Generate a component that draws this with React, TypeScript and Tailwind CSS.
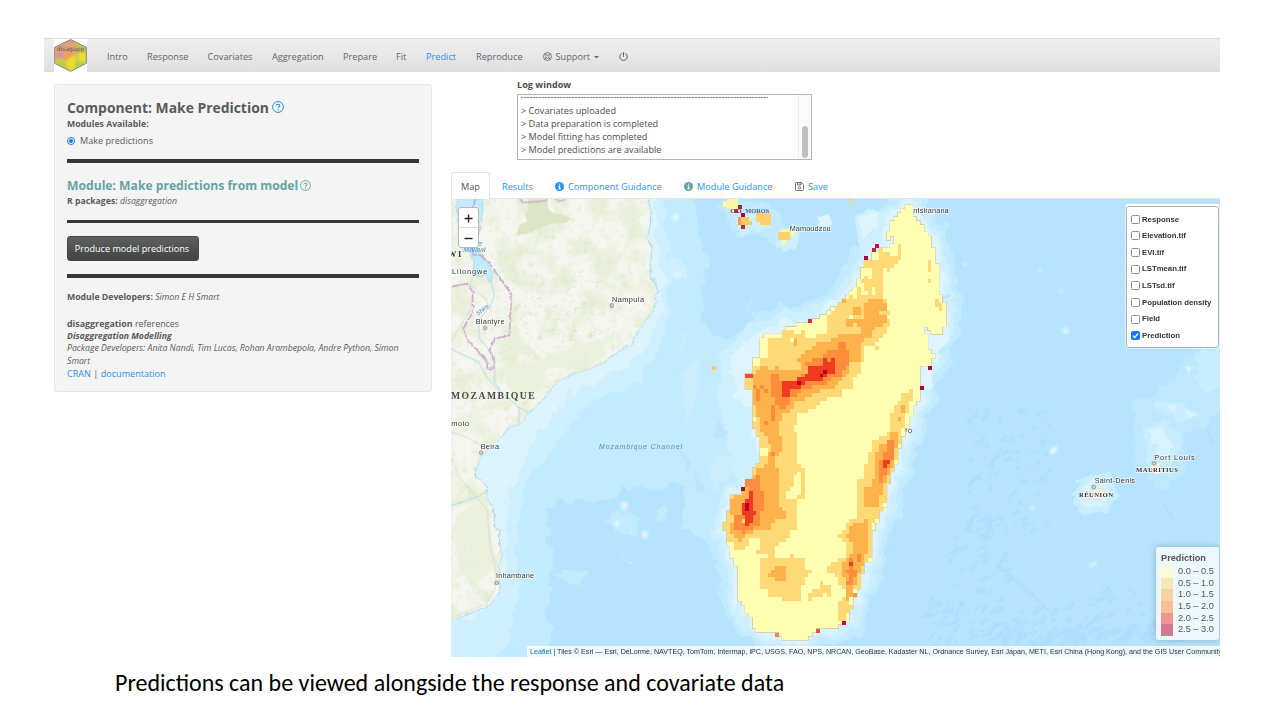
import React from "react";

type Pt = [number, number];
type Shape = { level: number; pts: Pt[] };
type Box = [level: number, x0: number, y0: number, x1: number, y1: number];

const CELL_W = 11.16;
const CELL_H = 11.76;
const ORIGIN_X = 113 - CELL_W * 8;
const ORIGIN_Y = 30;
const COLS = 61;
const ROWS = 112;

const LEVEL_COLORS = ["none", "#ffffb2", "#fed976", "#feb24c", "#fd8d3c", "#f03b20", "#bd0026"];

const parse = (s: string): Pt[] => s.trim().split(/\s+/).map((p) => p.split(",").map(Number) as Pt);

const OUTLINE =
  "570,30 592,30 592,53 603,65 615,77 626,89 626,112 638,124 650,124 650,160 660,160 660,207 671,207 671,301 683,301 683,324 693,324 693,395 683,395 683,418 650,418 640,406 637,395 626,395 626,418 637,418 637,465 649,465 649,478 660,478 660,489 649,489 649,513 615,513 615,618 604,630 592,630 592,665 581,665 581,700 571,700 571,724 560,724 560,760 549,760 549,806 537,806 537,830 526,830 526,865 515,865 515,935 504,935 504,950 493,950 493,983 481,983 481,1006 470,1006 470,1100 448,1100 448,1137 437,1137 437,1172 426,1172 426,1206 413,1206 413,1230 402,1230 402,1277 380,1277 370,1300 313,1300 300,1312 280,1325 268,1336 202,1336 202,1325 190,1312 135,1312 124,1300 113,1289 113,1277 101,1253 90,1253 90,1230 79,1218 68,1218 68,1113 57,1113 57,1088 46,1088 46,1053 36,1053 36,1006 25,1006 25,983 36,983 36,947 46,947 46,912 57,900 79,900 90,890 90,855 113,855 113,818 124,818 124,806 135,800 135,724 124,724 124,700 113,700 113,583 101,583 101,571 90,571 90,536 113,536 113,500 124,489 135,489 135,430 147,418 202,418 214,406 214,395 247,395 247,383 290,383 290,372 313,372 313,360 336,360 336,348 347,348 347,336 369,330 369,324 381,324 381,312 392,312 392,301 403,301 403,289 415,289 415,277 426,277 426,254 437,254 437,218 448,218 448,195 470,195 470,180 482,171 492,171 492,160 526,160 526,148 537,148 537,124 526,124 526,136 515,136 515,112 526,112 526,77 537,77 548,65 548,53 560,53 560,42 570,42";

const SHAPES: Shape[] = [
  { level: 1, pts: parse(OUTLINE) },
  {
    level: 2,
    pts: parse(
      "448,195 492,195 492,160 504,160 504,171 526,171 526,183 548,183 548,148 560,148 560,183 548,195 548,207 537,207 526,218 526,230 515,230 504,218 504,312 515,312 515,348 526,348 526,360 515,360 526,383 526,395 504,395 515,406 504,418 492,430 482,442 470,454 448,460 448,500 437,500 437,530 426,530 415,560 415,583 381,583 381,595 370,606 347,606 336,618 302,630 302,642 258,653 247,665 247,683 236,683 236,712 247,712 247,806 258,806 268,830 268,912 247,912 247,1006 225,1006 225,1018 214,1030 202,1041 190,1053 180,1065 180,1088 225,1088 225,1077 236,1077 236,1088 268,1088 268,1113 280,1123 291,1123 291,1134 280,1137 268,1160 258,1172 258,1206 247,1218 202,1218 202,1206 158,1206 158,1183 135,1183 135,1100 135,1088 158,1088 158,1077 124,1077 124,1065 135,1065 135,1030 113,1030 101,1041 101,1053 90,1053 90,1065 68,1065 57,1053 46,1041 36,1041 36,1006 25,1006 25,983 36,983 36,947 46,947 46,912 57,900 79,900 90,890 90,855 113,855 113,818 124,818 124,806 135,800 135,740 124,712 113,690 113,583 101,583 90,571 90,536 113,536 113,513 135,513 135,489 147,489 158,478 158,430 202,430 202,406 236,406 236,418 258,418 258,406 268,406 268,430 302,430 302,418 314,418 325,430 336,412 336,360 347,348 369,336 381,324 392,312 403,301 415,312 426,301 415,289 426,277 437,277 437,300 448,312 448,277 437,265 437,254 448,242 460,254 460,218 448,218",
    ),
  },
  {
    level: 3,
    pts: parse(
      "113,536 135,524 135,513 158,513 158,524 190,513 190,524 247,524 258,513 247,489 258,478 270,465 302,454 313,442 350,442 350,430 372,430 372,418 426,418 437,406 437,395 415,372 415,336 437,336 437,360 448,372 448,324 459,324 459,313 504,313 504,324 515,324 515,348 493,348 493,360 515,360 515,372 504,383 493,395 470,406 470,430 448,430 437,442 437,500 403,500 403,530 392,545 370,560 347,583 325,583 302,595 258,618 236,618 236,642 214,653 202,665 190,680 190,724 202,724 202,771 180,783 180,806 190,818 190,935 214,950 214,971 190,971 169,983 169,1006 135,1006 113,1012 101,1018 90,1030 79,1041 68,1030 46,1018 46,1006 57,960 46,947 46,912 79,900 90,870 113,850 124,830 135,818 158,806 158,783 169,760 158,735 147,724 135,700 135,665 124,653 113,653 113,595",
    ),
  },
  {
    level: 4,
    pts: parse(
      "169,536 190,536 190,560 236,560 247,548 280,530 280,513 258,513 280,500 302,489 325,489 325,478 336,478 336,465 350,465 370,465 370,442 392,442 392,465 403,465 403,500 392,513 381,530 381,545 359,545 336,560 325,571 302,571 290,583 268,583 247,595 247,606 225,606 225,618 214,630 202,642 190,630 190,618 180,642 180,677 169,677 169,630 180,618 180,606 169,595",
    ),
  },
  {
    level: 4,
    pts: parse(
      "90,855 113,855 113,870 124,842 135,842 135,888 147,900 147,947 135,947 135,983 113,1006 90,1006 90,1018 68,1006 57,1006 57,960 79,960 79,924 101,912 101,890 90,870",
    ),
  },
  {
    level: 5,
    pts: parse(
      "202,560 236,560 247,548 270,548 270,536 280,530 280,513 302,513 325,507 325,489 336,489 336,500 347,500 347,489 359,489 359,536 336,536 325,548 313,560 270,560 270,571 258,571 258,583 225,583 225,606 202,606",
    ),
  },
  {
    level: 5,
    pts: parse(
      "101,890 113,890 113,947 124,947 124,960 113,960 113,983 101,983 101,995 90,995 90,960 79,960 79,924 90,924 101,912",
    ),
  },
  {
    level: 2,
    pts: parse(
      "581,583 592,583 592,618 581,618 581,650 571,665 571,700 560,700 560,735 549,750 549,800 537,800 537,830 526,830 526,853 515,865 504,877 515,888 515,912 504,935 504,947 493,947 493,971 481,971 481,983 470,983 470,1088 448,1100 448,1125 437,1137 437,1172 426,1183 413,1183 413,1206 402,1218 413,1241 402,1253 392,1265 392,1277 370,1277 370,1218 392,1206 392,1183 370,1172 370,1148 347,1137 336,1125 336,1113 359,1100 370,1088 392,1088 392,1041 370,1030 370,1018 381,1018 392,995 402,983 402,971 426,971 426,855 448,855 448,806 459,806 459,771 470,771 470,735 492,735 492,724 515,724 515,712 526,712 526,654 537,653 537,630 549,618 560,618 560,600 571,600",
    ),
  },
  {
    level: 3,
    pts: parse(
      "526,712 549,712 549,748 537,771 537,806 526,820 515,853 504,865 504,890 493,912 493,930 470,930 470,935 448,935 448,880 470,877 470,865 481,842 481,771 493,760 493,748 515,748",
    ),
  },
  {
    level: 3,
    pts: parse(
      "437,971 437,983 448,971 459,971 459,1065 448,1077 448,1100 437,1125 426,1148 426,1160 413,1172 413,1206 402,1206 402,1218 392,1218 392,1172 402,1160 381,1137 381,1100 402,1088 415,1065 415,1041 392,1030 392,1018 402,1018 402,1006 415,983 426,983",
    ),
  },
  { level: 4, pts: parse("515,735 537,735 537,790 526,806 515,818 515,842 504,842 504,865 493,865 493,806 504,783 504,771 515,771") },
  { level: 4, pts: parse("402,1088 415,1100 415,1125 426,1125 426,1148 413,1148 413,1172 392,1172 392,1160 402,1148 402,1137 392,1137 392,1125 402,1113") },
  { level: 2, pts: parse("313,1160 325,1160 325,1172 347,1172 347,1206 336,1206 336,1195 302,1206 302,1206 291,1218 280,1218 280,1195 302,1183 313,1172") },
  { level: 3, pts: parse("158,1137 180,1125 180,1113 214,1113 214,1160 202,1160 202,1148 190,1160 180,1148 158,1148") },
];

const BOXES: Box[] = [
  [1, 247, 830, 258, 900],
  [1, 236, 842, 247, 912],
  [1, 225, 877, 236, 912],
  [1, 214, 888, 225, 912],
  [1, 135, 760, 158, 783],
  [1, 459, 230, 470, 254],
  [1, 470, 277, 482, 301],
  [1, 448, 289, 459, 301],
  [1, 403, 360, 415, 383],
  [2, 415, 360, 437, 372],
  [3, 392, 372, 415, 395],
  [3, 381, 312, 392, 324],
  [1, 459, 218, 470, 230],
  [1, 280, 418, 291, 430],
  [1, 225, 430, 236, 442],
  [3, 236, 430, 247, 454],
  [2, 482, 454, 493, 465],
  [2, 638, 195, 649, 230],
  [2, 638, 254, 649, 265],
  [2, 660, 313, 671, 336],
  [2, 671, 324, 683, 348],
  [3, 560, 630, 571, 653],
  [3, 549, 665, 560, 677],
  [4, 426, 1077, 437, 1100],
  [5, 504, 795, 526, 806],
  [5, 504, 806, 515, 818],
  [5, 402, 1100, 413, 1113],
  [4, 113, 571, 124, 583],
  [4, 124, 583, 135, 618],
  [4, 135, 571, 147, 583],
  [4, 147, 583, 158, 590],
  [4, 147, 677, 158, 690],
  [4, 169, 771, 180, 783],
  [2, 113, 630, 124, 653],
  [1, 113, 665, 124, 677],
  [6, 325, 524, 336, 536],
  [6, 313, 536, 325, 548],
  [6, 247, 560, 258, 571],
  [6, 90, 924, 101, 947],
  [2, 79, 971, 90, 983],
];

function inside(x: number, y: number, pts: Pt[]): boolean {
  let hit = false;
  for (let i = 0, j = pts.length - 1; i < pts.length; j = i++) {
    const [xi, yi] = pts[i];
    const [xj, yj] = pts[j];
    if (yi > y !== yj > y && x < ((xj - xi) * (y - yi)) / (yj - yi) + xi) hit = !hit;
  }
  return hit;
}

function rasterise() {
  const rects: { x: number; y: number; w: number; level: number }[] = [];
  for (let r = 0; r < ROWS; r++) {
    const cy = ORIGIN_Y + (r + 0.5) * CELL_H;
    let start = 0;
    let prev = 0;
    for (let c = 0; c <= COLS; c++) {
      const cx = ORIGIN_X + (c + 0.5) * CELL_W;
      let level = 0;
      if (c < COLS) {
        for (const s of SHAPES) if (inside(cx, cy, s.pts)) level = s.level;
        if (level) for (const [l, x0, y0, x1, y1] of BOXES) if (cx > x0 && cx < x1 && cy > y0 && cy < y1) level = l;
      }
      if (level !== prev) {
        if (prev) rects.push({ x: ORIGIN_X + start * CELL_W, y: ORIGIN_Y + r * CELL_H, w: (c - start) * CELL_W, level: prev });
        start = c;
        prev = level;
      }
    }
  }
  return rects;
}

const RASTER = rasterise();

const LOOSE: [string, number, number, number, number][] = [
  ["#a80a36", 447, 183, 12, 12],
  ["#c02348", 470, 160, 12, 12],
  ["#b8183e", 481, 148, 12, 12],
  ["#c5304c", 280, 372, 12, 12],
  ["#a80a36", 638, 513, 12, 12],
  ["#a80a36", 615, 572, 12, 12],
  ["#a80a36", 79, 877, 12, 12],
  ["#b8183e", 381, 1278, 12, 12],
  ["#e05a45", 302, 1301, 12, 12],
  ["#f3814b", 180, 1313, 12, 12],
  ["#f5955c", 413, 1195, 12, 12],
  ["#e05540", 90, 536, 23, 12],
  ["#f58a58", 90, 855, 23, 12],
  ["#fdc766", -9, 512, 13, 13],
  ["#fff5a8", 25, 18, 45, 18],
  ["#fff5a8", 36, 12, 32, 31],
  ["#fb9a5a", 68, 67, 11, 24],
  ["#fdc766", 79, 67, 22, 24],
  ["#fdc766", 101, 79, 11, 12],
  ["#c02348", 57, 43, 12, 11],
  ["#b8183e", 68, 31, 12, 12],
  ["#a80a36", 79, 55, 12, 12],
  ["#c02348", 79, 91, 12, 12],
  ["#fdd070", 124, 55, 45, 26],
  ["#fdd070", 135, 81, 34, 10],
  ["#fff5a8", 202, 101, 22, 12],
  ["#fdd070", 190, 112, 35, 24],
  ["#fff5a8", 224, 112, 12, 12],
  ["#fff5a8", 202, 136, 12, 12],
  ["#fdd070", 402, 12, 12, 7],
];

const COAST =
  "M-60,-40 L595,-40 595,12 603,50 600,95 591,130 606,160 601,205 600,240 608,262 612,250 615,270 625,288 612,306 618,318 609,345 600,360 575,395 553,428 545,450 530,452 500,475 480,486 465,500 425,520 380,532 345,548 310,572 290,600 262,632 235,655 215,685 180,695 155,722 140,742 110,770 88,790 85,810 78,820 75,845 90,855 108,870 112,890 110,910 125,930 132,955 135,1000 150,1005 148,1040 156,1080 148,1110 148,1140 150,1190 120,1230 90,1243 60,1255 3,1278 -60,1300Z";

const BORDER = "M3,275 L52,266 68,290 68,350 55,375 40,402 56,440 85,470 110,495 M110,495 L112,520 130,520 133,495 118,465 135,430 178,422 185,300 150,250 118,205 95,182 70,180 66,150 M75,12 L70,40";

function seeded(seed: number) {
  let s = seed;
  return () => {
    s = (s * 16807) % 2147483647;
    return s / 2147483647;
  };
}

function scatter(n: number, seed: number, x0: number, y0: number, x1: number, y1: number, size: number) {
  const rnd = seeded(seed);
  return Array.from({ length: n }, () => ({
    x: x0 + rnd() * (x1 - x0),
    y: y0 + rnd() * (y1 - y0),
    rx: size * (0.3 + rnd()),
    ry: size * (0.15 + rnd() * 0.35),
    a: -50 + rnd() * 30,
  }));
}

const HILLS = scatter(80, 77, 190, 230, 470, 440, 6);
const RIDGES = [
  ...scatter(110, 91, 1555, 640, 1800, 1010, 13),
  ...scatter(50, 12, 1500, 960, 1680, 1190, 15),
  ...scatter(110, 41, 1430, 1210, 1960, 1340, 15),
  ...scatter(80, 5, 1640, 1290, 2120, 1350, 17),
  ...scatter(50, 8, 1960, 1180, 2300, 1340, 15),
];

function BaseMap() {
  return (
    <svg className="block h-full w-full" viewBox="3 12 2307 1374" preserveAspectRatio="none">
      <defs>
        <filter id="rough" x="-5%" y="-5%" width="110%" height="110%" colorInterpolationFilters="sRGB">
          <feTurbulence type="fractalNoise" baseFrequency="0.022" numOctaves="4" seed="4" result="n" />
          <feDisplacementMap in="SourceGraphic" in2="n" scale="48" xChannelSelector="R" yChannelSelector="G" />
        </filter>
        <filter id="fine" x="-5%" y="-5%" width="110%" height="110%" colorInterpolationFilters="sRGB">
          <feTurbulence type="fractalNoise" baseFrequency="0.07" numOctaves="3" seed="9" result="n" />
          <feDisplacementMap in="SourceGraphic" in2="n" scale="10" xChannelSelector="R" yChannelSelector="G" />
        </filter>
        <filter id="green" x="0" y="0" width="100%" height="100%" colorInterpolationFilters="sRGB">
          <feTurbulence type="fractalNoise" baseFrequency="0.014" numOctaves="6" seed="21" />
          <feColorMatrix values="0 0 0 0 0.91  0 0 0 0 0.942  0 0 0 0 0.85  4 0 0 0 -1.7" />
        </filter>
        <filter id="relief" x="0" y="0" width="100%" height="100%" colorInterpolationFilters="sRGB">
          <feTurbulence type="fractalNoise" baseFrequency="0.06" numOctaves="4" seed="3" />
          <feColorMatrix values="0 0 0 0 0.82  0 0 0 0 0.84  0 0 0 0 0.73  0 2.5 0 0 -1.4" />
        </filter>
        <filter id="soft" colorInterpolationFilters="sRGB">
          <feGaussianBlur stdDeviation="5" />
        </filter>
        <clipPath id="land">
          <path d={COAST} />
        </clipPath>
      </defs>

      <rect x="0" y="0" width="2320" height="1400" fill="#b6e4fe" />

      <g filter="url(#rough)">
        <path
          fill="#c3ebff"
          d="M500,-40 L735,-40 745,120 775,190 755,290 760,370 800,430 850,425 900,380 1000,330 1050,360 1000,700 900,900 860,1180 800,1080 760,1030 690,1010 715,930 700,860 600,890 510,870 500,905 400,925 330,915 285,960 300,1050 310,1110 290,1230 310,1386 150,1420 -60,1420 -60,1200 200,700Z"
        />
        <path fill="#b9e6fe" d="M690,740 L712,800 705,860 695,800Z M800,680 L830,720 800,730Z M735,830 L760,870 750,890Z" />
        <path fill="#c3ebff" d="M500,950 L560,960 570,1020 510,1020 460,980Z M310,1140 L420,1120 400,1170 330,1160Z M620,950 L650,940 640,985 615,975Z M515,1090 L540,1100 530,1110Z" />
        <path fill="#ceeffe" d="M590,-40 L640,-40 650,180 710,220 700,250 655,240 645,420 560,560 400,640 300,760 230,860 200,1000 210,1150 190,1290 130,1420 -60,1420 -60,1270 140,1100 60,800Z" />
        <path fill="#cbedfe" d="M700,520 L750,500 740,600 705,690 690,620Z M690,410 L705,420 700,480Z M810,780 L900,760 930,1000 830,960 775,830Z" />
        <path fill="#dcf4ff" d="M585,-40 L612,-40 612,100 640,260 635,360 580,470 450,560 360,590 280,700 220,790 180,880 165,1060 150,1200 80,1260 -60,1300 -60,1200 60,800Z" />
      </g>

      <g filter="url(#rough)" transform="translate(795 0)">
        <polygon points={OUTLINE} fill="#c3ebff" stroke="#c3ebff" strokeWidth="96" strokeLinejoin="round" />
        <polygon points={OUTLINE} fill="#ceeffe" stroke="#ceeffe" strokeWidth="58" strokeLinejoin="round" />
        <polygon points={OUTLINE} fill="#dcf4ff" stroke="#dcf4ff" strokeWidth="26" strokeLinejoin="round" />
        <path fill="#ceeffe" d="M10,620 L20,480 100,390 230,350 300,360 200,600 140,860 60,840Z M425,60 L470,40 520,60 480,150 430,170Z" />
        <path fill="#def5ff" d="M55,600 L45,500 120,415 220,375 290,380 200,600 140,840 120,740 110,650Z M440,60 L480,50 490,90 450,130Z M305,70 L350,65 350,95 305,95Z M650,390 L710,350 700,430 670,500 645,580 620,540Z" />
        <path fill="#c2eafe" d="M10,30 L170,20 200,90 260,110 230,160 180,150 120,110 60,120Z M100,290 L120,340 150,350 130,365 105,330Z" />
        <path fill="#ceeffe" d="M60,60 L170,55 170,95 80,110Z M185,95 L250,95 235,155 190,150Z" />
        <path fill="#bde8fe" d="M1260,620 L1330,600 1420,480 1530,440 1530,640 1460,700 1400,720 1420,850 1320,880 1260,780Z" />
        <path fill="#c8edfe" d="M1310,630 L1370,615 1450,650 1430,680 1340,660Z M1280,690 L1370,680 1400,740 1370,850 1310,830Z M1450,470 L1530,450 1530,570 1470,590 1440,530Z M1060,900 L1110,840 1190,840 1210,900 1180,950 1100,955Z" />
        <path fill="#d8f3ff" d="M1345,630 L1390,625 1385,655Z M1410,640 L1445,655 1420,670Z M1300,700 L1350,700 1370,790 1330,790Z M1400,520 L1440,520 1420,545Z M1095,870 L1140,850 1180,880 1170,930 1110,925Z" />
      </g>

      <g fill="#abddfc" opacity="0.75" filter="url(#fine)">
        {RIDGES.map((b, i) => (
          <ellipse key={i} cx={b.x} cy={b.y} rx={b.rx} ry={b.ry} transform={`rotate(${b.a} ${b.x} ${b.y})`} />
        ))}
      </g>
      <g fill="none" stroke="#add9f6" strokeWidth="7" opacity="0.6" filter="url(#fine)">
        <path d="M1640,1110 L1700,1160 1760,1210 1800,1250 M1460,320 L1500,300 M2140,930 L2170,970 M2270,700 L2290,750" />
      </g>
      <g fill="#e3f7ff" filter="url(#soft)">
        <circle cx="1847" cy="407" r="9" />
        <ellipse cx="1811" cy="766" rx="15" ry="8" transform="rotate(-45 1811 766)" />
        <ellipse cx="1930" cy="1108" rx="16" ry="6" transform="rotate(-30 1930 1108)" opacity="0.7" />
        <circle cx="1545" cy="207" r="5" />
        <circle cx="1768" cy="226" r="5" />
        <circle cx="1834" cy="289" r="5" />
        <circle cx="1747" cy="940" r="6" />
        <circle cx="584" cy="1018" r="10" />
        <circle cx="676" cy="66" r="10" />
        <circle cx="682" cy="241" r="9" />
        <circle cx="500" cy="985" r="8" />
        <circle cx="522" cy="932" r="11" />
      </g>

      <g filter="url(#fine)">
        <path d={COAST} fill="#f6f6f0" stroke="#a5d5ea" strokeWidth="3" />
        <g clipPath="url(#land)">
          <rect x="0" y="0" width="640" height="1300" filter="url(#green)" />
          <rect x="0" y="0" width="640" height="1300" filter="url(#relief)" opacity="0.4" />
          <path fill="#dce5c6" d="M235,12 L290,12 300,50 365,68 340,86 300,85 250,110 198,122 210,90 228,82 232,50Z" />
          <path fill="#e8f0d8" d="M320,470 L450,430 470,480 400,520 300,520 260,500Z M170,510 L290,500 280,580 200,620 170,560Z M20,960 L110,900 130,1060 120,1130 70,1180 20,1100Z" opacity="0.8" />
          <g fill="#cfd0b4" opacity="0.4">
            {HILLS.map((b, i) => (
              <ellipse key={i} cx={b.x} cy={b.y} rx={b.rx} ry={b.ry} transform={`rotate(${b.a} ${b.x} ${b.y})`} />
            ))}
          </g>
          <path fill="#c3ebfd" stroke="#9bd3ec" strokeWidth="2" d="M22,12 L100,12 98,50 88,110 80,150 95,185 115,210 128,240 122,262 105,240 78,248 70,225 72,195 45,160 30,110 20,60Z" />
        </g>
      </g>
      <g fill="none" strokeLinejoin="round">
        <path stroke="#dcd6cf" strokeWidth="2.5" d="M3,440 L30,395 60,345 70,290 110,310 M75,235 L60,270 100,300 125,350 M3,712 L50,725 90,750 M3,790 L30,850 70,895 112,945 120,1050 138,1130 135,1180 110,1225 20,1262" />
        <path stroke="#a9dbef" strokeWidth="3" d="M125,262 L133,300 120,335 85,375 88,430 118,465 135,500 133,560 150,585 M3,462 L40,480 85,500 112,550 140,580 175,610 205,635 235,652 M205,635 L210,660 205,682 M3,932 L40,920 60,912 85,905 112,885" />
        <g filter="url(#fine)">
          <path stroke="#c9a3cb" strokeWidth="5" opacity="0.85" strokeDasharray="26 3" d={BORDER} />
          <path stroke="#c9a3cb" strokeWidth="5" opacity="0.75" d="M208,12 L225,22 258,20 285,18 295,12 M315,12 L330,20 350,10" />
        </g>
      </g>
      <g fill="#f2efe8" stroke="#d8d4c8" strokeWidth="2" filter="url(#fine)">
        <ellipse cx="1942" cy="897" rx="24" ry="18" />
        <ellipse cx="2120" cy="820" rx="17" ry="20" />
      </g>

      <MapLabels />

      <g transform="translate(795 0)">
        <g fill="#d6c79a" stroke="#d6c79a" strokeWidth="4" opacity="0.8">
          {RASTER.map((b, i) => (
            <rect key={i} x={b.x} y={b.y} width={b.w} height={CELL_H} />
          ))}
        </g>
        <g shapeRendering="crispEdges">
          {RASTER.map((b, i) => (
            <rect key={i} x={b.x} y={b.y} width={b.w} height={CELL_H} fill={LEVEL_COLORS[b.level]} />
          ))}
          {LOOSE.map(([fill, x, y, w, h], i) => (
            <rect key={i} x={x} y={y} width={w} height={h} fill={fill} />
          ))}
        </g>
      </g>
      <text x="886" y="54" fontSize="19" textLength="72" fill="#333" opacity="0.75" fontWeight="700" fontFamily='"Liberation Serif", serif'>
        MOROS
      </text>
      <circle cx="1380" cy="708" r="5" fill="#fff" stroke="#666" strokeWidth="2.5" />
    </svg>
  );
}

type LabelDef = { t: string; x: number; y: number; w: number; s?: number; c?: string; serif?: boolean; italic?: boolean; rot?: number };

const LABELS: LabelDef[] = [
  { t: "Lilongwe", x: 6, y: 236, w: 106 },
  { t: "Nampula", x: 486, y: 321, w: 96 },
  { t: "Blantyre", x: 77, y: 388, w: 87 },
  { t: "moio", x: 4, y: 692, w: 53 },
  { t: "Beira", x: 92, y: 762, w: 55 },
  { t: "Inhambane", x: 138, y: 1150, w: 114 },
  { t: "Mamoudzou", x: 1019, y: 107, w: 123 },
  { t: "ntsiranana", x: 1390, y: 53, w: 106 },
  { t: "r", x: 1366, y: 712, w: 6 },
  { t: "Port Louis", x: 2113, y: 794, w: 121 },
  { t: "Saint-Denis", x: 1934, y: 864, w: 121 },
  { t: "MOZAMBIQUE", x: 3, y: 611, w: 251, s: 29, serif: true, c: "#4b4b4b" },
  { t: "WI", x: -6, y: 186, w: 40, s: 25, serif: true },
  { t: "CO", x: 841, y: 54, w: 34, s: 19, serif: true },
  { t: "MAURITIUS", x: 2058, y: 830, w: 126, s: 20, serif: true },
  { t: "RÉUNION", x: 1887, y: 905, w: 102, s: 20, serif: true },
  { t: "Mozambique Channel", x: 447, y: 761, w: 249, s: 21, italic: true, c: "#5592b0" },
  { t: "Malawi", x: 40, y: 171, w: 67, s: 21, italic: true, c: "#5592b0" },
  { t: "e", x: 84, y: 152, w: 12, s: 21, italic: true, c: "#5592b0" },
  { t: "Shire", x: 84, y: 362, w: 42, s: 18, italic: true, c: "#5592b0", rot: -38 },
];

const TOWNS: Pt[] = [
  [485, 332],
  [105, 399],
  [93, 773],
  [140, 1164],
  [2112, 805],
  [1931, 876],
];

function MapLabels() {
  return (
    <g>
      {LABELS.map((l) => (
        <text
          key={l.t}
          x={l.x}
          y={l.y}
          textLength={l.w}
          fontSize={l.s ?? 22}
          fill={l.c ?? "#333333"}
          stroke="#ffffff"
          strokeOpacity="0.7"
          strokeWidth={l.c ? 0 : 4}
          paintOrder="stroke"
          fontStyle={l.italic ? "italic" : "normal"}
          fontFamily={l.serif ? '"Liberation Serif", serif' : '"Liberation Sans", sans-serif'}
          fontWeight={l.serif ? 700 : 400}
          transform={l.rot ? `rotate(${l.rot} ${l.x} ${l.y})` : undefined}
        >
          {l.t}
        </text>
      ))}
      {TOWNS.map(([x, y]) => (
        <circle key={x} cx={x} cy={y} r="5" fill="#fff" stroke="#555" strokeWidth="2.5" />
      ))}
    </g>
  );
}

function Logo() {
  return (
    <svg className="block h-[33px] w-[33px] bg-white" viewBox="0 0 99 99">
      <defs>
        <clipPath id="hex">
          <path d="M50,1 L97,25 97,73 50,97 2,73 2,25Z" />
        </clipPath>
        <filter id="logoSoft" colorInterpolationFilters="sRGB">
          <feGaussianBlur stdDeviation="3.500" />
        </filter>
      </defs>
      <g clipPath="url(#hex)">
        <rect width="99" height="99" fill="#d9cb52" />
        <g filter="url(#logoSoft)">
          <path fill="#e3a07f" d="M0,0 H99 V30 L70,42 30,60 0,50Z" />
          <path fill="#d494a4" d="M8,42 L28,42 22,56 5,60Z" />
          <path fill="#eda05b" d="M30,40 L60,35 62,62 40,75 28,60Z" />
          <path fill="#c3c450" d="M60,8 L99,20 99,50 80,40 70,50Z" />
          <path fill="#ecdf2c" d="M35,65 L60,48 70,90 50,99Z M75,42 L97,42 94,72 76,74Z" />
          <path fill="#b3cf45" d="M64,66 L92,68 80,90 62,94Z M5,66 L25,64 40,92 15,82Z" />
        </g>
      </g>
      <path d="M50,2 L97,25 97,73 50,97 2,73 2,25Z" fill="none" stroke="#858585" strokeWidth="3" />
      <text x="8" y="36" fontSize="18" textLength="83" fill="#6b4f4d" fontFamily='"DejaVu Sans", sans-serif'>
        disagapp
      </text>
    </svg>
  );
}

function HelpIcon({ className }: { className: string }) {
  return (
    <svg className={className} viewBox="0 0 24 24" fill="none" stroke="currentColor" strokeWidth="2">
      <circle cx="12" cy="12" r="10.8" />
      <path d="M8.6 9.4c.2-2 1.500-3 3.500-3s3.400 1.200 3.400 2.900c0 2.300-3.300 2.500-3.300 4.800" strokeWidth="2.300" />
      <circle cx="12.100" cy="17.400" r="1.500" fill="currentColor" stroke="none" />
    </svg>
  );
}

function InfoIcon({ className }: { className: string }) {
  return (
    <svg className={className} viewBox="0 0 16 16">
      <circle cx="8" cy="8" r="8" fill="currentColor" />
      <path d="M7 3h2.300v2H7zM6 6.500h3.300v4.700h1V13H6v-1.800h1V8.200H6z" fill="#fff" />
    </svg>
  );
}

const NAV: [string, string][] = [
  ["Intro", "w-[40px]"],
  ["Response", "w-[60.5px]"],
  ["Covariates", "w-[64.5px]"],
  ["Aggregation", "w-[71px]"],
  ["Prepare", "w-[53px]"],
  ["Fit", "w-[30px]"],
  ["Predict", "w-[50px]"],
  ["Reproduce", "w-[67px]"],
];

function NavBar() {
  return (
    <nav className="flex h-[34px] items-center border-y border-[#dcdcdc] bg-linear-to-b from-[#efefef] to-[#e0e0e0] pl-[10px] text-[9.2px] text-[#666]">
      <Logo />
      <div className="flex items-center pt-[3px] pl-[20px]">
        {NAV.map(([label, width]) => (
          <span key={label} className={`${width} shrink-0 whitespace-nowrap ${label === "Predict" ? "text-[#2a92f2]" : ""}`}>
            {label}
          </span>
        ))}
        <span className="flex w-[76px] items-center">
          <svg className="mr-[3.500px] h-[9px] w-[9px]" viewBox="0 0 18 18" fill="none" stroke="currentColor" strokeWidth="1.600">
            <circle cx="9" cy="9" r="8" />
            <circle cx="9" cy="9" r="3.500" />
            <path d="M3.500 3.500l3 3M14.500 3.500l-3 3M3.500 14.500l3-3M14.500 14.500l-3-3" />
          </svg>
          Support
          <svg className="mt-[1px] ml-[4px] h-[2.500px] w-[5px]" viewBox="0 0 10 5">
            <path d="M0 0h10L5 5z" fill="currentColor" />
          </svg>
        </span>
        <svg className="h-[9px] w-[9px]" viewBox="0 0 18 18" fill="none" stroke="currentColor" strokeWidth="2" strokeLinecap="round">
          <path d="M9 1v8M5 3a7.500 7.500 0 1 0 8 0" />
        </svg>
      </div>
    </nav>
  );
}

function Rule({ className }: { className: string }) {
  return <div className={`h-[3.500px] shrink-0 bg-[#373535] ${className}`} />;
}

function Sidebar() {
  return (
    <aside className="h-[308px] w-[378px] shrink-0 rounded-[3px] border border-[#e6e6e6] bg-[#f4f4f4] px-[12px] pt-[12px] text-[8.7px] leading-[13px] text-[#5a5a5a]">
      <h2 className="flex h-[20px] items-center text-[13.900px] font-bold whitespace-nowrap">
        Component: Make Prediction
        <HelpIcon className="ml-[3px] h-[12px] w-[12px] text-[#2a92f2]" />
      </h2>
      <p className="pt-[1px] font-bold">Modules Available:</p>
      <div className="mt-[3px] flex items-center text-[9.100px]">
        <span className="mr-[5px] flex h-[8px] w-[8px] items-center justify-center rounded-full border-[1.500px] border-[#0a7bff] bg-white">
          <span className="h-[4px] w-[4px] rounded-full bg-[#0a7bff]" />
        </span>
        Make predictions
      </div>
      <Rule className="mt-[12px]" />
      <h3 className="mt-[13px] flex h-[19px] items-center text-[12.150px] font-bold whitespace-nowrap text-[#66a3a1]">
        Module: Make predictions from model
        <HelpIcon className="ml-[2px] h-[11px] w-[11px]" />
      </h3>
      <p>
        <b>R packages:</b> <i>disaggregation</i>
      </p>
      <Rule className="mt-[12px]" />
      <button className="mt-[12.500px] flex h-[25px] w-[132px] items-center justify-center rounded-[3px] border border-[#454746] bg-linear-to-b from-[#5f6160] to-[#424443] pr-[2px] text-[9.100px] text-white">
        Produce model predictions
      </button>
      <Rule className="mt-[13.500px]" />
      <p className="mt-[13px]">
        <b>Module Developers:</b> <i>Simon E H Smart</i>
      </p>
      <p className="mt-[13px] text-[8.900px]">
        <b>disaggregation</b> references
      </p>
      <p className="leading-[12.500px] font-bold italic">Disaggregation Modelling</p>
      <p className="leading-[12.700px] italic">
        Package Developers: Anita Nandi, Tim Lucas, Rohan Arambepola, Andre Python, Simon
        <br />
        Smart
      </p>
      <p className="text-[9.100px]">
        <span className="text-[#2a92f2]">CRAN</span> | <span className="text-[#2a92f2]">documentation</span>
      </p>
    </aside>
  );
}

function LogWindow() {
  return (
    <section className="ml-[66px] w-[295px] text-[9.150px] text-[#4d4d4d]">
      <div className="h-[16px] leading-[13px] font-bold">Log window</div>
      <div className="flex h-[66px] justify-between overflow-hidden border border-[#b4b4b4] bg-white">
        <div className="pl-[3px] leading-[13px]">
          <div className="mt-[2px] mb-[6px] h-px w-[247px] bg-[repeating-linear-gradient(90deg,#888_0_2px,#ccc_2px_3px)]" />
          <div>&gt; Covariates uploaded</div>
          <div>&gt; Data preparation is completed</div>
          <div>&gt; Model fitting has completed</div>
          <div>&gt; Model predictions are available</div>
        </div>
        <div className="flex w-[13px] items-end justify-center border-l border-[#eee] bg-[#fafafa] pb-[1px]">
          <div className="h-[32px] w-[6px] rounded-full bg-[#c1c1c1]" />
        </div>
      </div>
    </section>
  );
}

function Tabs() {
  return (
    <div className="flex h-[26px] items-center border-b border-[#e4e4e4] pt-[2px] text-[9.200px] text-[#2a92f2]">
      <span className="-mt-[2px] flex h-[27px] w-[39px] shrink-0 items-center justify-center rounded-t-[3px] border border-b-0 border-[#e4e4e4] bg-white pt-[2px] text-[#555]">Map</span>
      <span className="w-[65px] pl-[12px]">Results</span>
      <span className="flex w-[129px] items-center">
        <InfoIcon className="mr-[4px] h-[9px] w-[9px]" />
        Component Guidance
      </span>
      <span className="flex w-[111px] items-center">
        <InfoIcon className="mr-[4px] h-[9px] w-[9px] text-[#66a3a1]" />
        Module Guidance
      </span>
      <span className="flex items-center">
        <svg className="mr-[4px] h-[9px] w-[9px] text-[#666]" viewBox="0 0 18 18" fill="none" stroke="currentColor" strokeWidth="1.800">
          <path d="M3 1h10l4 4v10a2 2 0 0 1-2 2H3a2 2 0 0 1-2-2V3a2 2 0 0 1 2-2zM5 1v5h7V1M10 2v3" />
          <circle cx="9" cy="11.500" r="2.300" />
        </svg>
        Save
      </span>
    </div>
  );
}

const LAYERS = ["Response", "Elevation.tif", "EVI.tif", "LSTmean.tif", "LSTsd.tif", "Population density", "Field", "Prediction"];

function LayerControl() {
  return (
    <div className="absolute top-[7px] right-[1px] h-[142px] w-[93px] rounded-[3px] border border-[#a9b2b8] bg-white pt-[4px] pl-[4px] font-['Liberation_Sans',sans-serif] text-[7.750px] font-bold text-[#333] shadow-[0_0_0_1px_rgba(255,255,255,0.5)]">
      {LAYERS.map((name) => (
        <div key={name} className="flex h-[16.650px] items-center whitespace-nowrap">
          {name === "Prediction" ? (
            <svg className="mr-[2px] h-[9px] w-[9px] shrink-0" viewBox="0 0 18 18">
              <rect width="18" height="18" rx="4" fill="#0a7bff" />
              <path d="M4 9.500l3.500 3.500L14 5" fill="none" stroke="#fff" strokeWidth="2.500" />
            </svg>
          ) : (
            <span className="mr-[2px] h-[9px] w-[9px] shrink-0 rounded-[1.500px] border border-[#8f8f9d] bg-white" />
          )}
          {name}
        </div>
      ))}
    </div>
  );
}

const LEGEND: [string, string][] = [
  ["0.0 – 0.5", "bg-[#fafbd4]"],
  ["0.5 – 1.0", "bg-[#f8e6b7]"],
  ["1.0 – 1.5", "bg-[#f7d3a1]"],
  ["1.5 – 2.0", "bg-[#f6bf98]"],
  ["2.0 – 2.5", "bg-[#f0958b]"],
  ["2.5 – 3.0", "bg-[#d5778f]"],
];

function Legend() {
  return (
    <div className="absolute top-[348px] right-[1px] h-[93px] w-[63px] rounded-[3px] bg-[#eff8fe]/95 pt-[6px] pl-[5px] font-['Liberation_Sans',sans-serif] text-[#555] shadow-[0_0_7px_rgba(0,0,0,0.25)]">
      <div className="h-[13px] text-[9.200px] leading-[11px] font-bold">Prediction</div>
      {LEGEND.map(([label, color]) => (
        <div key={label} className="flex h-[11.700px] items-center text-[9.200px] whitespace-nowrap">
          <span className={`mr-[5px] h-full w-[12px] shrink-0 ${color}`} />
          {label}
        </div>
      ))}
    </div>
  );
}

function MapPanel() {
  return (
    <div className="relative h-[458px] w-[769px] overflow-hidden">
      <BaseMap />
      <div className="absolute top-[8px] left-[7px] flex h-[41px] w-[21px] flex-col rounded-[3px] border border-[#b9b9b9] bg-white text-[#222]">
        <div className="flex h-[21px] items-center justify-center border-b border-[#ddd]">
          <svg className="mt-[1px] h-[9px] w-[9px]" viewBox="0 0 9 9" stroke="currentColor" strokeWidth="1.400">
            <path d="M4.500 .5v8M.5 4.500h8" />
          </svg>
        </div>
        <div className="flex h-[19px] items-center justify-center">
          <svg className="mt-[1px] h-[9px] w-[9px]" viewBox="0 0 9 9" stroke="currentColor" strokeWidth="1.400">
            <path d="M.5 4.500h8" />
          </svg>
        </div>
      </div>
      <div className="absolute top-[4px] right-0 h-[23px] w-[95px] rounded-[3px] border border-[#d5dde2] bg-white" />
      <LayerControl />
      <Legend />
      <div className="absolute bottom-0 left-[76px] h-[11px] w-[700px] bg-white/75 pl-[3px] font-['Liberation_Sans',sans-serif] text-[7.140px] leading-[12px] whitespace-nowrap text-[#333]">
        <span className="text-[#0078a8]">Leaflet</span> | Tiles © Esri — Esri, DeLorme, NAVTEQ, TomTom, Intermap, iPC, USGS, FAO, NPS, NRCAN, GeoBase, Kadaster NL, Ordnance Survey, Esri Japan, METI, Esri China (Hong Kong), and the GIS User Community
      </div>
    </div>
  );
}

export default function App() {
  return (
    <div className="h-[720px] w-[1280px] overflow-hidden bg-white pt-[38px] pl-[44px] font-['Open_Sans',sans-serif]">
      <div className="w-[1176px]">
        <NavBar />
        <div className="flex pl-[10px]">
          <div className="pt-[12px]">
            <Sidebar />
          </div>
          <main className="ml-[19px] w-[769px] pt-[6px]">
            <LogWindow />
            <div className="pt-[13px]">
              <Tabs />
            </div>
            <MapPanel />
          </main>
        </div>
      </div>
      <p className="mt-[10px] ml-[71px] font-['Carlito','Lato',sans-serif] text-[24px] leading-[32px] whitespace-nowrap text-black">
        Predictions can be viewed alongside the response and covariate data
      </p>
    </div>
  );
}
